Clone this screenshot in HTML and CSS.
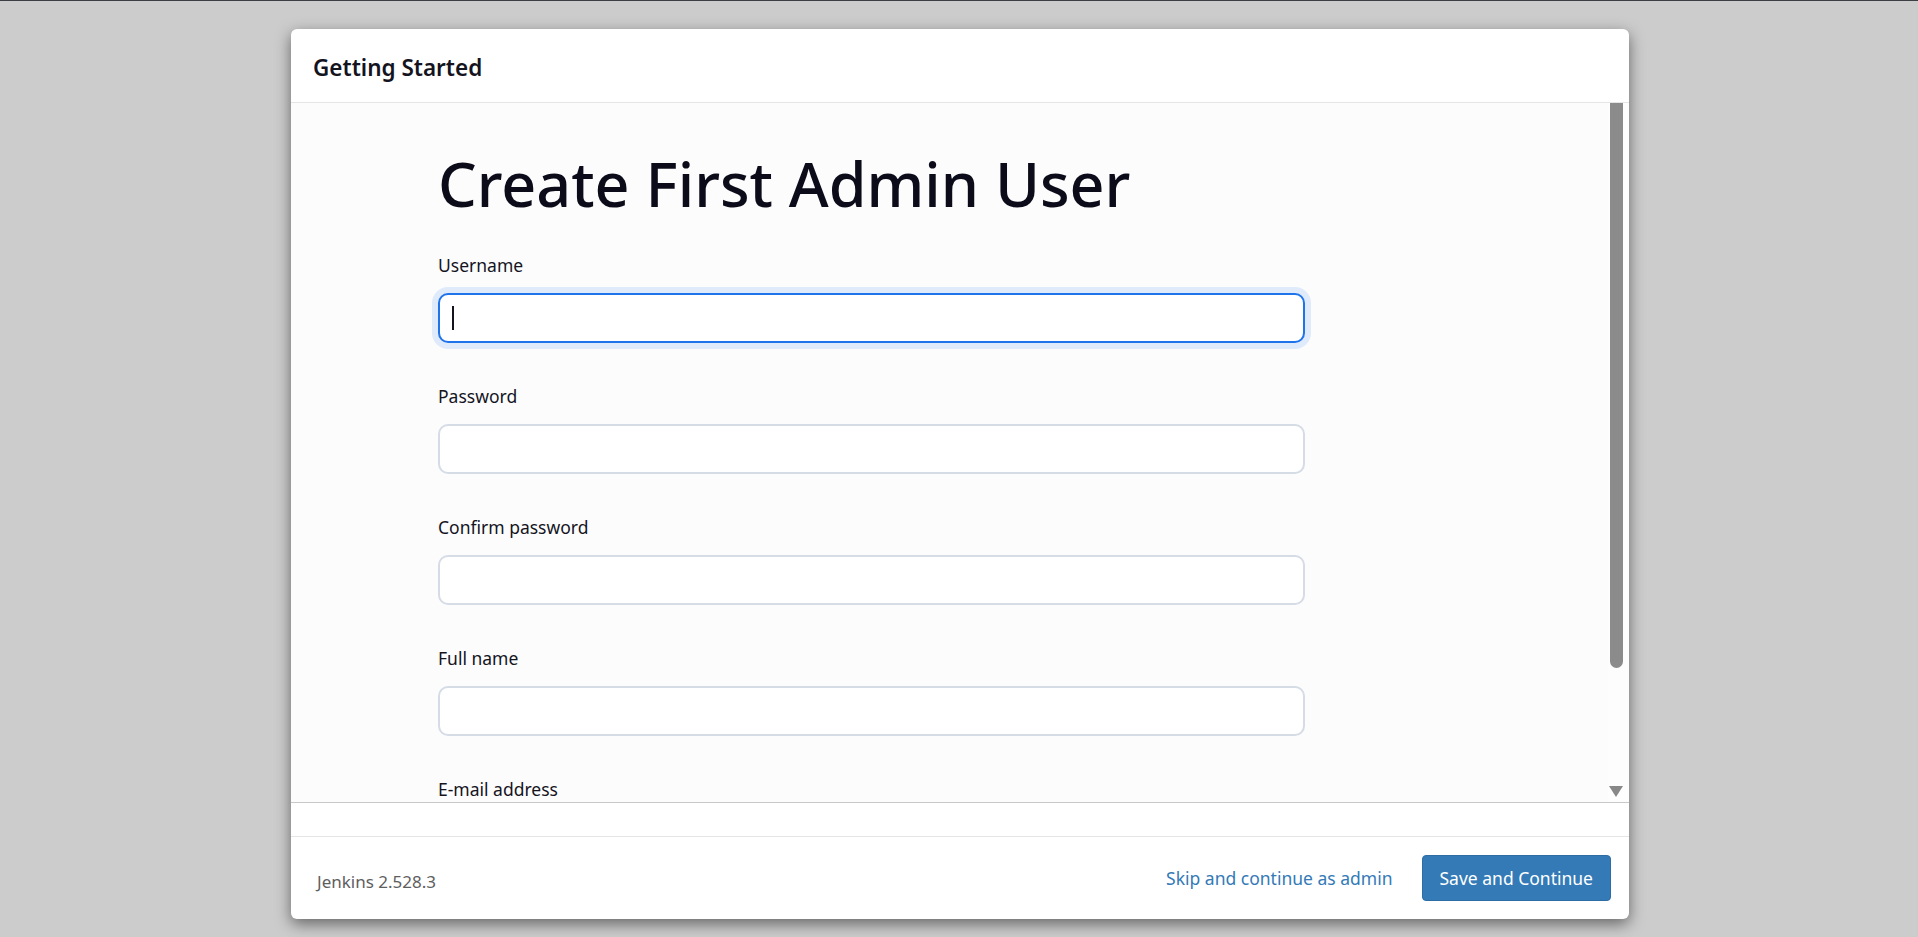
FILE: index.html
```html
<!DOCTYPE html>
<html lang="en">
<head>
  <meta charset="UTF-8">
  <meta name="viewport" content="width=device-width, initial-scale=1.0">
  <title>Setup Wizard [Jenkins]</title>
  <link rel="stylesheet" href="styles.css">
</head>
<body>
  <div class="modal">
    <header class="modal-header">
      <h2 class="modal-title">Getting Started</h2>
    </header>

    <div class="modal-body">
      <div class="body-scroll">
        <form class="setup-form">
          <h1 class="form-title">Create First Admin User</h1>

          <div class="field">
            <label class="field-label" for="username">Username</label>
            <div class="input-wrap">
              <input class="field-input is-focused" id="username" type="text">
              <span class="caret"></span>
            </div>
          </div>

          <div class="field">
            <label class="field-label" for="password1">Password</label>
            <input class="field-input" id="password1" type="password">
          </div>

          <div class="field">
            <label class="field-label" for="password2">Confirm password</label>
            <input class="field-input" id="password2" type="password">
          </div>

          <div class="field">
            <label class="field-label" for="fullname">Full name</label>
            <input class="field-input" id="fullname" type="text">
          </div>

          <div class="field">
            <label class="field-label" for="email">E-mail address</label>
            <input class="field-input" id="email" type="email">
          </div>
        </form>
      </div>

      <div class="scrollbar">
        <div class="scroll-track">
          <div class="scroll-thumb"></div>
        </div>
        <div class="scroll-arrow"></div>
      </div>
    </div>

    <div class="modal-gap"></div>

    <footer class="modal-footer">
      <span class="version">Jenkins 2.528.3</span>
      <div class="actions">
        <a class="skip-link" href="#">Skip and continue as admin</a>
        <button class="btn-primary" type="button">Save and Continue</button>
      </div>
    </footer>
  </div>
</body>
</html>
```

FILE: styles.css
```css
* {
  box-sizing: border-box;
}

body {
  margin: 0;
  height: 937px;
  overflow: hidden;
  background-color: #cccccc;
  border-top: 1px solid #3b3e43;
  font-family: "Noto Sans", "Open Sans", sans-serif;
  color: #14141f;
}

.modal {
  width: 1338px;
  height: 890px;
  margin: 28px auto 0 291px;
  display: flex;
  flex-direction: column;
  background-color: #fff;
  border-radius: 6px;
  overflow: hidden;
  box-shadow: 0 5px 15px rgba(0, 0, 0, 0.5);
}

.modal-header {
  height: 74px;
  flex-shrink: 0;
  display: flex;
  align-items: center;
  padding: 4px 22px 0;
  border-bottom: 1px solid #e5e5e5;
}

.modal-title {
  margin: 0;
  font-size: 22.5px;
  font-weight: 600;
}

/* scrollable area, scrollbar drawn by hand */
.modal-body {
  flex: 1;
  min-height: 0;
  display: flex;
  background-color: #fcfcfc;
  border-bottom: 1px solid #c8c8c8;
}

.body-scroll {
  flex: 1;
  overflow: hidden;
  padding-left: 147px;
}

.scrollbar {
  width: 21px;
  display: flex;
  flex-direction: column;
  background-color: #fdfdfd;
}

.scroll-track {
  flex: 1;
  padding: 0 6px 0 2px;
}

.scroll-thumb {
  height: 565px;
  background-color: #8b8b8b;
  border-radius: 0 0 7px 7px;
}

.scroll-arrow {
  width: 0;
  height: 0;
  margin: 0 0 5px 1px;
  border-left: 7.5px solid transparent;
  border-right: 7.5px solid transparent;
  border-top: 11px solid #888;
}

.setup-form {
  width: 867px;
  padding: 39px 0 36px;
}

.form-title {
  margin: 0 0 26px;
  font-size: 61px;
  font-weight: 500;
  line-height: 84px;
  color: #0b0b1a;
}

.field {
  margin-bottom: 40px;
}

.field-label {
  display: block;
  margin-bottom: 15px;
  font-size: 17.5px;
  line-height: 26px;
}

.input-wrap {
  position: relative;
}

.field-input {
  display: block;
  width: 100%;
  height: 50px;
  padding: 0 13px;
  border: 2px solid #d5dce6;
  border-radius: 10px;
  background-color: #fff;
  font: inherit;
  outline: none;
}

.field-input.is-focused {
  border-color: #1f74ec;
  box-shadow: 0 0 0 6px #dfeafb;
}

.caret {
  position: absolute;
  left: 14px;
  top: 13px;
  width: 2px;
  height: 24px;
  background-color: #14141f;
}

.modal-gap {
  height: 34px;
  flex-shrink: 0;
  border-bottom: 1px solid #e5e5e5;
}

.modal-footer {
  height: 82px;
  flex-shrink: 0;
  display: flex;
  align-items: center;
  justify-content: space-between;
  padding: 0 18px 0 26px;
}

.version {
  padding-top: 6px;
  font-size: 17px;
  color: #5e5e5e;
}

.actions {
  display: flex;
  align-items: center;
  gap: 29px;
}

.skip-link {
  font-size: 17.5px;
  color: #337ab7;
  text-decoration: none;
}

.btn-primary {
  height: 46px;
  padding: 0 17px;
  border: 1px solid #2e6da4;
  border-radius: 4px;
  background-color: #337ab7;
  color: #fff;
  font: inherit;
  font-size: 17.5px;
}
```
